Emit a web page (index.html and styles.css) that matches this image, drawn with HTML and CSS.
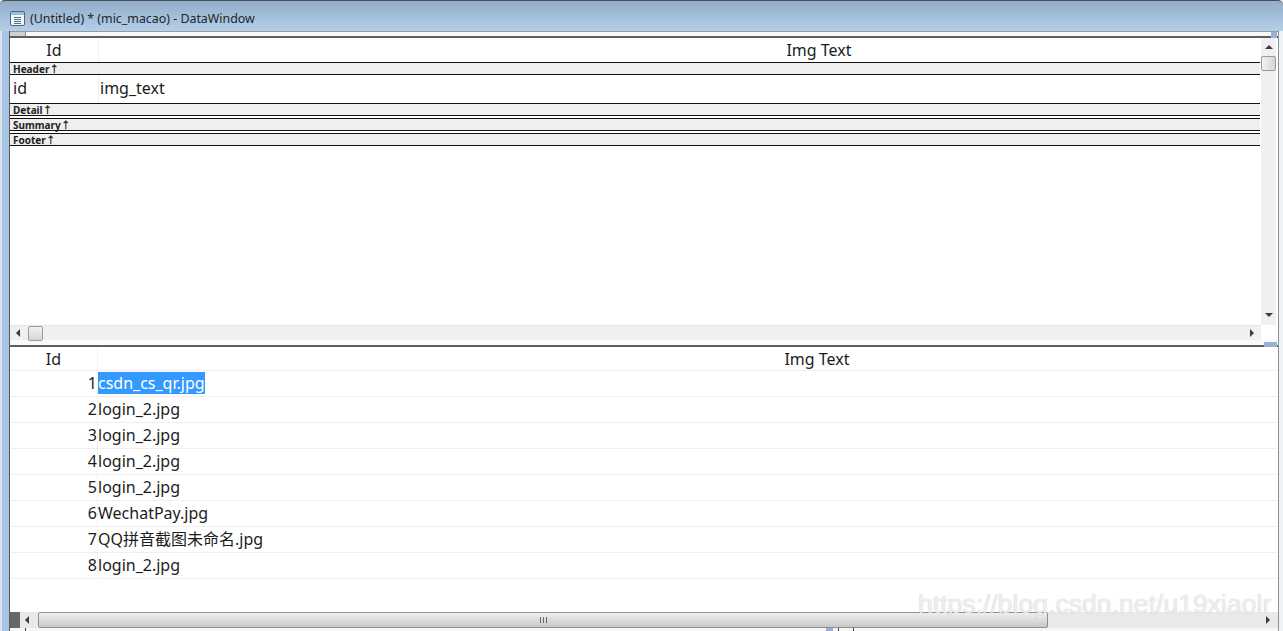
FILE: index.html
```html
<!DOCTYPE html>
<html lang="en">
<head>
  <meta charset="UTF-8" />
  <title>(Untitled) * (mic_macao) - DataWindow</title>
  <link rel="stylesheet" href="styles.css">
</head>
<body>
  <div class="window">
    <div class="title-bar">
      <svg class="title-icon" width="15" height="15" viewBox="0 0 15 15">
        <rect x="0.5" y="0.5" width="14" height="14" rx="1.5" fill="#f2f7fc" stroke="#45688f"/>
        <rect x="1" y="1" width="13" height="3" fill="#9dbde0"/>
        <path d="M4 6.5h7M4 8.5h7M4 10.5h7M4 12.5h7" stroke="#5a6c82" fill="none"/>
      </svg>
      <span>(Untitled) * (mic_macao) - DataWindow</span>
    </div>

    <div class="frame">
      <div class="pane-top">
        <div class="tab-strip"><div class="tab"></div><div class="split-mark"></div></div>
        <div class="design-body">
          <div class="design-grid">
            <div class="design-row head-row">
              <div class="cell-id center">Id</div>
              <div class="cell-text center">Img Text</div>
            </div>
            <div class="band">Header↑</div>
            <div class="design-row detail-row">
              <div class="cell-id">id</div>
              <div class="cell-text">img_text</div>
            </div>
            <div class="band">Detail↑</div>
            <div class="band band-gap">Summary↑</div>
            <div class="band band-gap">Footer↑</div>
          </div>
          <div class="vscroll">
            <div class="arrow-up"></div>
            <div class="v-thumb"></div>
            <div class="v-track"></div>
            <div class="arrow-down"></div>
          </div>
        </div>
        <div class="hscroll hscroll-top">
          <div class="arrow-left"></div>
          <div class="h-thumb-small"></div>
          <div class="h-track"></div>
          <div class="arrow-right"></div>
        </div>
        <div class="split-strip"><div class="split-mark"></div></div>
      </div>

      <div class="pane-bottom">
        <div class="preview-grid">
          <div class="preview-row preview-head">
            <div class="num center">Id</div>
            <div class="txt center">Img Text</div>
          </div>
          <div class="preview-row"><div class="num">1</div><div class="txt"><span class="selected">csdn_cs_qr.jpg</span></div></div>
          <div class="preview-row"><div class="num">2</div><div class="txt">login_2.jpg</div></div>
          <div class="preview-row"><div class="num">3</div><div class="txt">login_2.jpg</div></div>
          <div class="preview-row"><div class="num">4</div><div class="txt">login_2.jpg</div></div>
          <div class="preview-row"><div class="num">5</div><div class="txt">login_2.jpg</div></div>
          <div class="preview-row"><div class="num">6</div><div class="txt">WechatPay.jpg</div></div>
          <div class="preview-row"><div class="num">7</div><div class="txt">QQ拼音截图未命名.jpg</div></div>
          <div class="preview-row"><div class="num">8</div><div class="txt">login_2.jpg</div></div>
        </div>
        <div class="hscroll hscroll-bottom">
          <div class="corner"></div>
          <div class="arrow-left"></div>
          <div class="h-thumb-wide"><span class="grip"></span></div>
          <div class="h-track"></div>
          <div class="arrow-right"></div>
        </div>
        <div class="bottom-strip">
          <span class="tick tick-first"></span>
          <span class="bottom-mark"></span>
          <span class="tick tick-second"></span>
          <span class="tick tick-third"></span>
        </div>
      </div>
    </div>
  </div>
  <div class="watermark">https://blog.csdn.net/u19xiaolr</div>
</body>
</html>
```

FILE: styles.css
```css
html, body {
  margin: 0;
  height: 631px;
  overflow: hidden;
}

body {
  font-family: "Noto Sans", "Noto Sans CJK SC", sans-serif;
  color: #1c1c1c;
  background: #fff;
  position: relative;
}

.window {
  height: 631px;
  display: flex;
  flex-direction: column;
  background: linear-gradient(90deg, #dde4ec 0 2px, #a9c5e5 2px 1000px, #eef1f5 1000px);
}

.title-bar {
  height: 31px;
  box-sizing: border-box;
  border-top: 1px solid #4a4f52;
  border-radius: 5px 5px 0 0;
  padding: 5px 0 0 10px;
  display: flex;
  align-items: center;
  gap: 5px;
  font-size: 12.4px;
  color: #20262c;
  background: linear-gradient(180deg, #93adca, #b4cfe9);
  flex-shrink: 0;
}

.frame {
  flex: 1;
  margin-left: 9px;
  margin-right: 4px;
  border-left: 1px solid #55585a;
  border-right: 1px solid #8d8f90;
  display: flex;
  flex-direction: column;
  background: #fff;
  min-height: 0;
}

.tab-strip {
  height: 7px;
  box-sizing: border-box;
  border-top: 1px solid #9a9c9d;
  background: linear-gradient(#5c5e5f, #5c5e5f) bottom / 100% 2px no-repeat #f8f8f8;
  display: flex;
  justify-content: space-between;
}

.tab {
  width: 15px;
  height: 4px;
  background: #cfd2d4;
  border-right: 1px solid #8a8c8d;
}

.split-mark {
  width: 13px;
  height: 5px;
  background: #98b2d3;
  align-self: flex-end;
  margin-right: 1px;
}

.tab-strip .split-mark {
  width: 6px;
  height: 6px;
}

.design-body {
  display: flex;
  height: 287px;
}

.design-grid {
  flex: 1;
  min-width: 0;
  overflow: hidden;
}

.design-row {
  display: flex;
  font-size: 16px;
}

.head-row {
  height: 24px;
  line-height: 24px;
}

.detail-row {
  height: 28px;
  line-height: 27px;
}

.cell-id {
  width: 89px;
  flex-shrink: 0;
  box-sizing: border-box;
  padding-left: 3px;
  border-right: 1px solid #f0f0f0;
}

.cell-id.center {
  padding-left: 0;
}

.cell-text {
  flex: none;
  width: 1440px;
  white-space: nowrap;
}

.detail-row .cell-text {
  padding-left: 1px;
}

.center {
  text-align: center;
}

.band {
  height: 13px;
  box-sizing: border-box;
  border-top: 1px solid #111;
  border-bottom: 1px solid #111;
  background: #efefef;
  font-size: 10px;
  font-weight: 700;
  line-height: 12px;
  padding-left: 3px;
  margin-right: 1px;
  color: #222;
}

.band-gap {
  margin-top: 2px;
}

.vscroll {
  width: 15px;
  margin-right: 2px;
  background: #f0f0f0;
  display: flex;
  flex-direction: column;
  align-items: center;
  flex-shrink: 0;
}

.arrow-up {
  margin-top: 7px;
  border-left: 4px solid transparent;
  border-right: 4px solid transparent;
  border-bottom: 4px solid #3d3d3d;
}

.v-thumb {
  width: 15px;
  height: 15px;
  margin-top: 7px;
  border: 1px solid #9b9b9b;
  border-radius: 2px;
  box-sizing: border-box;
  background: linear-gradient(90deg, #f2f2f2, #d5d5d5);
}

.v-track {
  flex: 1;
}

.arrow-down {
  margin-bottom: 8px;
  border-left: 4px solid transparent;
  border-right: 4px solid transparent;
  border-top: 4px solid #3d3d3d;
}

.hscroll {
  display: flex;
  align-items: center;
  background: #f0f0f0;
}

.hscroll-top {
  height: 15px;
  margin-right: 17px;
  border-top: 1px solid #e6e6e6;
  box-sizing: border-box;
  padding: 0 7px 0 6px;
}

.arrow-left {
  border-top: 4px solid transparent;
  border-bottom: 4px solid transparent;
  border-right: 4px solid #3d3d3d;
}

.arrow-right {
  border-top: 4px solid transparent;
  border-bottom: 4px solid transparent;
  border-left: 4px solid #3d3d3d;
}

.h-thumb-small {
  width: 15px;
  height: 15px;
  margin-left: 8px;
  box-sizing: border-box;
  border: 1px solid #9b9b9b;
  border-radius: 2px;
  background: linear-gradient(180deg, #f2f2f2, #d5d5d5);
}

.h-track {
  flex: 1;
}

.split-strip {
  height: 7px;
  display: flex;
  justify-content: flex-end;
  background: linear-gradient(#5c5e5f, #5c5e5f) bottom / 100% 2px no-repeat #fafafa;
}

.pane-bottom {
  flex: 1;
  display: flex;
  flex-direction: column;
  min-height: 0;
}

.preview-grid {
  flex: 1;
  overflow: hidden;
}

.preview-row {
  display: flex;
  height: 26px;
  box-sizing: border-box;
  border-bottom: 1px solid #efefef;
  font-size: 16px;
  line-height: 25px;
}

.preview-head {
  height: 24px;
  line-height: 24px;
}

.num {
  width: 88px;
  flex-shrink: 0;
  box-sizing: border-box;
  text-align: right;
  border-right: 1px solid #f3f3f3;
}

.num.center {
  text-align: center;
}

.txt {
  flex: none;
  width: 1438px;
  white-space: nowrap;
}

.selected {
  background: #3399ff;
  color: #fff;
}

.hscroll-bottom {
  height: 16px;
  flex-shrink: 0;
  background: #e9e9e9;
  padding-right: 8px;
}

.corner {
  width: 10px;
  height: 16px;
  background: #676767;
  margin-right: 5px;
}

.h-thumb-wide {
  width: 1010px;
  height: 16px;
  margin-left: 9px;
  box-sizing: border-box;
  border: 1px solid #8f8f8f;
  border-radius: 2px;
  background: linear-gradient(180deg, #efefef, #c9c9c9);
  display: flex;
  align-items: center;
  justify-content: center;
}

.grip {
  width: 7px;
  height: 6px;
  background: repeating-linear-gradient(90deg, #666 0 1px, transparent 1px 3px);
}

.bottom-strip {
  height: 3px;
  flex-shrink: 0;
  display: flex;
  background: #f6f6f6;
}

.tick {
  width: 1px;
  height: 3px;
  background: #444;
}

.tick-first {
  margin-left: 15px;
}

.tick-second {
  margin-left: 5px;
}

.tick-third {
  margin-left: 14px;
}

.bottom-mark {
  width: 7px;
  height: 3px;
  margin-left: 800px;
  background: #98b2d3;
}

.watermark {
  position: absolute;
  left: 918px;
  top: 585px;
  font-family: "Liberation Sans", sans-serif;
  font-size: 26.6px;
  line-height: 38px;
  white-space: nowrap;
  color: rgba(255, 255, 255, 0.75);
  text-shadow: 0 0 1px rgba(150, 150, 150, 0.7);
}
```
